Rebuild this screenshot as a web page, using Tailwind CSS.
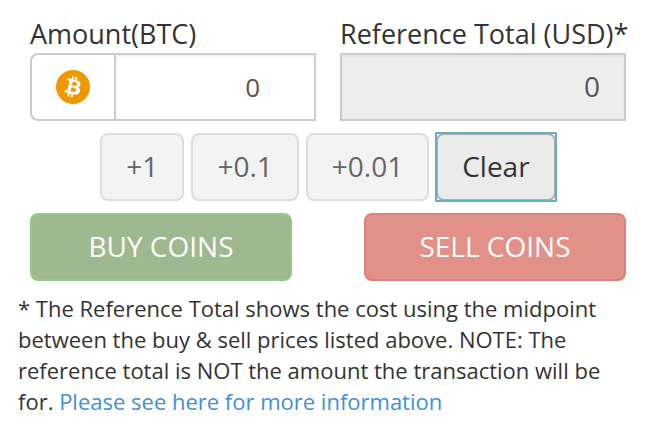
<!DOCTYPE html>
<html lang="en">
<head>
<meta charset="utf-8">
<title>Trade</title>
<script src="https://cdn.jsdelivr.net/npm/@tailwindcss/browser@4"></script>
</head>
<body class="bg-white text-[#333] font-['Open_Sans',sans-serif]">
<main class="px-[18px] pt-4">
  <form class="pr-1 pl-3">
    <div class="grid grid-cols-2 gap-6">
      <div>
        <label for="amount" class="block pb-0.5 text-[27px] leading-[35px] whitespace-nowrap">Amount(BTC)</label>
        <div class="flex h-[68px] rounded-l-lg border-2 border-[#ccc]">
          <span class="flex w-[84px] shrink-0 items-center justify-center border-r-2 border-[#ccc]">
            <svg class="size-[34px]" viewBox="0 0 24 24" aria-hidden="true">
              <circle cx="12" cy="12" r="12" fill="#f09800"/>
              <path fill="#fff" fill-rule="evenodd" d="M17.288 10.291c.24-1.59-.974-2.45-2.64-3.03l.54-2.153-1.315-.33-.525 2.107c-.345-.087-.705-.167-1.064-.25l.526-2.127-1.32-.33-.54 2.165c-.285-.067-.565-.132-.84-.2l-1.815-.45-.35 1.407s.975.225.955.236c.535.136.63.486.615.766l-1.477 5.92c-.075.166-.24.406-.614.314.015.02-.96-.24-.96-.24l-.66 1.51 1.71.426.93.242-.54 2.19 1.32.327.54-2.17c.36.1.705.19 1.05.273l-.51 2.154 1.32.33.545-2.19c2.24.427 3.93.257 4.64-1.774.57-1.637-.03-2.58-1.217-3.196.854-.193 1.5-.76 1.68-1.93zm-3 4.22c-.404 1.64-3.157.75-4.05.53l.72-2.9c.896.23 3.757.67 3.33 2.37zm.41-4.24c-.37 1.49-2.662.735-3.405.55l.654-2.64c.744.18 3.137.524 2.75 2.084z"/>
            </svg>
          </span>
          <input id="amount" type="text" value="0" class="w-full min-w-0 pr-[54px] text-right text-[26px] text-[#555] shadow-[inset_0_2px_2px_rgba(0,0,0,0.05)]">
        </div>
      </div>
      <div>
        <label for="total" class="block pb-0.5 text-[27px] leading-[35px] whitespace-nowrap">Reference Total (USD)*</label>
        <input id="total" type="text" value="0" readonly class="h-[68px] w-full border-2 border-[#ccc] bg-[#eee] pr-6 pb-0.5 text-right text-[28px] text-[#555] shadow-[inset_0_2px_2px_rgba(0,0,0,0.05)]">
      </div>
    </div>
    <div class="mt-3 flex justify-center gap-[7px] text-[28px]">
      <button type="button" class="h-[68px] rounded-lg border-2 border-[#ddd] bg-[#f3f3f3] px-6 pb-0.5 text-[#666]">+1</button>
      <button type="button" class="h-[68px] rounded-lg border-2 border-[#ddd] bg-[#f3f3f3] px-6 pb-0.5 text-[#666]">+0.1</button>
      <button type="button" class="h-[68px] rounded-lg border-2 border-[#ddd] bg-[#f3f3f3] px-6 pb-0.5 text-[#666]">+0.01</button>
      <button type="button" class="relative h-[68px] rounded-lg border-2 border-[#adadad] bg-[#ebebeb] px-6 pb-0.5 after:absolute after:-inset-[3px] after:rounded-[1px] after:border-2 after:border-[#66afbd]">Clear</button>
    </div>
    <div class="mt-3 grid grid-cols-2 gap-[72px] text-[28px] text-white">
      <button type="button" class="h-[68px] rounded-lg border-2 border-[#93c986] bg-[#9eb88f] pb-0.5">BUY COINS</button>
      <button type="button" class="h-[68px] rounded-lg border-2 border-[#df8078] bg-[#e29188] pb-0.5">SELL COINS</button>
    </div>
  </form>
  <p class="mt-3 text-[22px] leading-[31px]">* The Reference Total shows the cost using the midpoint between the buy &amp; sell prices listed above. NOTE: The reference total is NOT the amount the transaction will be for. <a href="#" class="text-[#428fd6]">Please see here for more information</a></p>
</main>
</body>
</html>
